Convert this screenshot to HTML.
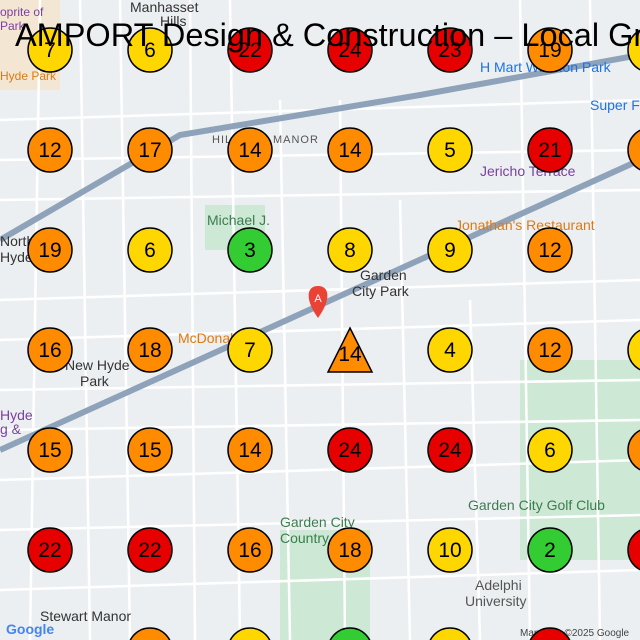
<!DOCTYPE html>
<html><head><meta charset="utf-8"><style>
html,body{margin:0;padding:0;width:640px;height:640px;overflow:hidden;background:#eef0f2}
svg{display:block}
text{font-family:"Liberation Sans",sans-serif}
</style></head><body>
<svg width="640" height="640" viewBox="0 0 640 640" xmlns="http://www.w3.org/2000/svg">
<rect width="640" height="640" fill="#eceff1"/>
<rect x="205" y="205" width="60" height="45" fill="#cde8d4"/>
<rect x="520" y="360" width="120" height="200" fill="#cde8d4"/>
<rect x="280" y="530" width="90" height="110" fill="#cde8d4"/>
<rect x="0" y="0" width="60" height="90" fill="#f3e6d2"/>
<g stroke="#ffffff" stroke-width="2.5" fill="none">
<path d="M0 120 L640 100 M0 200 L640 190 M0 300 L640 280 M0 390 L640 380 M0 480 L640 460 M0 590 L640 570"/>
<path d="M40 0 L30 640 M120 0 L130 640 M190 0 L195 640 M280 100 L290 640 M340 100 L345 640 M400 200 L410 640 M470 300 L480 640 M590 0 L600 640"/>
<path d="M0 160 L640 150 M0 340 L640 320 M0 430 L640 420 M0 530 L640 515 M80 0 L90 640 M230 0 L240 640 M520 0 L530 640"/>
</g>
<path d="M0 240 L180 135 L420 95 L640 55" stroke="#8ea3ba" stroke-width="6" fill="none"/>
<path d="M0 450 L640 160" stroke="#8ea3ba" stroke-width="6" fill="none"/>
<g font-size="14" fill="#555">
<text x="212" y="143" font-size="11" letter-spacing="1">HILLSIDE MANOR</text>
<text x="207" y="225" fill="#3a7d4f">Michael J.</text>
<text x="360" y="280" fill="#333">Garden</text>
<text x="352" y="296" fill="#333">City Park</text>
<text x="65" y="370" fill="#333">New Hyde</text>
<text x="80" y="386" fill="#333">Park</text>
<text x="178" y="343" fill="#e07a10">McDonald's</text>
<text x="455" y="230" fill="#e07a10">Jonathan's Restaurant</text>
<text x="480" y="176" fill="#7b3fa0">Jericho Terrace</text>
<text x="468" y="510" fill="#3a7d4f">Garden City Golf Club</text>
<text x="280" y="527" fill="#3a7d4f">Garden City</text>
<text x="280" y="543" fill="#3a7d4f">Country Cl</text>
<text x="475" y="590">Adelphi</text>
<text x="465" y="606">University</text>
<text x="40" y="621" fill="#333">Stewart Manor</text>
<text x="480" y="72" fill="#1a73e8">H Mart Williston Park</text>
<text x="590" y="110" fill="#1a73e8">Super FL</text>
<text x="0" y="246" fill="#333">North</text>
<text x="0" y="262" fill="#333">Hyde</text>
<text x="0" y="420" fill="#7b3fa0">Hyde</text>
<text x="0" y="434" fill="#7b3fa0">g &amp;</text>
<text x="0" y="16" fill="#7b3fa0" font-size="12">oprite of</text>
<text x="0" y="30" fill="#7b3fa0" font-size="12">Park</text>
<text x="0" y="80" fill="#e07a10" font-size="12">Hyde Park</text>
<text x="130" y="12" fill="#333">Manhasset</text>
<text x="160" y="26" fill="#333">Hills</text>
</g>
<path d="M318 318 C305 300 306 286 318 286 C330 286 331 300 318 318Z" fill="#ea4335"/>
<text x="318" y="302" font-size="11" fill="#fff" text-anchor="middle">A</text>
<text x="6" y="634" font-size="14" fill="#4285f4" font-weight="bold">Google</text>
<text x="520" y="636" font-size="10" fill="#444">Map data ©2025 Google</text>
<g stroke="#000" stroke-width="1.5">
<circle cx="50" cy="50" r="22" fill="#ffd700"/><circle cx="150" cy="50" r="22" fill="#ffd700"/><circle cx="250" cy="50" r="22" fill="#e60000"/><circle cx="350" cy="50" r="22" fill="#e60000"/><circle cx="450" cy="50" r="22" fill="#e60000"/><circle cx="550" cy="50" r="22" fill="#ff8c00"/><circle cx="650" cy="50" r="22" fill="#ffd700"/>
<circle cx="50" cy="150" r="22" fill="#ff8c00"/><circle cx="150" cy="150" r="22" fill="#ff8c00"/><circle cx="250" cy="150" r="22" fill="#ff8c00"/><circle cx="350" cy="150" r="22" fill="#ff8c00"/><circle cx="450" cy="150" r="22" fill="#ffd700"/><circle cx="550" cy="150" r="22" fill="#e60000"/><circle cx="650" cy="150" r="22" fill="#ff8c00"/>
<circle cx="50" cy="250" r="22" fill="#ff8c00"/><circle cx="150" cy="250" r="22" fill="#ffd700"/><circle cx="250" cy="250" r="22" fill="#33cc33"/><circle cx="350" cy="250" r="22" fill="#ffd700"/><circle cx="450" cy="250" r="22" fill="#ffd700"/><circle cx="550" cy="250" r="22" fill="#ff8c00"/>
<circle cx="50" cy="350" r="22" fill="#ff8c00"/><circle cx="150" cy="350" r="22" fill="#ff8c00"/><circle cx="250" cy="350" r="22" fill="#ffd700"/><path d="M350 328 L372 372 L328 372Z" fill="#ff8c00"/><circle cx="450" cy="350" r="22" fill="#ffd700"/><circle cx="550" cy="350" r="22" fill="#ff8c00"/><circle cx="650" cy="350" r="22" fill="#ffd700"/>
<circle cx="50" cy="450" r="22" fill="#ff8c00"/><circle cx="150" cy="450" r="22" fill="#ff8c00"/><circle cx="250" cy="450" r="22" fill="#ff8c00"/><circle cx="350" cy="450" r="22" fill="#e60000"/><circle cx="450" cy="450" r="22" fill="#e60000"/><circle cx="550" cy="450" r="22" fill="#ffd700"/><circle cx="650" cy="450" r="22" fill="#ff8c00"/>
<circle cx="50" cy="550" r="22" fill="#e60000"/><circle cx="150" cy="550" r="22" fill="#e60000"/><circle cx="250" cy="550" r="22" fill="#ff8c00"/><circle cx="350" cy="550" r="22" fill="#ff8c00"/><circle cx="450" cy="550" r="22" fill="#ffd700"/><circle cx="550" cy="550" r="22" fill="#33cc33"/><circle cx="650" cy="550" r="22" fill="#e60000"/>
<circle cx="150" cy="650" r="22" fill="#ff8c00"/><circle cx="250" cy="650" r="22" fill="#ffd700"/><circle cx="350" cy="650" r="22" fill="#33cc33"/><circle cx="450" cy="650" r="22" fill="#ffd700"/><circle cx="550" cy="650" r="22" fill="#e60000"/>
</g>
<g font-size="21" text-anchor="middle" fill="#000">
<text x="50" y="57">7</text><text x="150" y="57">6</text><text x="250" y="57">22</text><text x="350" y="57">24</text><text x="450" y="57">23</text><text x="550" y="57">19</text>
<text x="50" y="157">12</text><text x="150" y="157">17</text><text x="250" y="157">14</text><text x="350" y="157">14</text><text x="450" y="157">5</text><text x="550" y="157">21</text>
<text x="50" y="257">19</text><text x="150" y="257">6</text><text x="250" y="257">3</text><text x="350" y="257">8</text><text x="450" y="257">9</text><text x="550" y="257">12</text>
<text x="50" y="357">16</text><text x="150" y="357">18</text><text x="250" y="357">7</text><text x="350" y="361">14</text><text x="450" y="357">4</text><text x="550" y="357">12</text>
<text x="50" y="457">15</text><text x="150" y="457">15</text><text x="250" y="457">14</text><text x="350" y="457">24</text><text x="450" y="457">24</text><text x="550" y="457">6</text>
<text x="50" y="557">22</text><text x="150" y="557">22</text><text x="250" y="557">16</text><text x="350" y="557">18</text><text x="450" y="557">10</text><text x="550" y="557">2</text>
</g>
<text x="15" y="46" font-size="32.5" fill="#000">AMPORT Design &amp; Construction – Local Grid</text>
</svg>
</body></html>
